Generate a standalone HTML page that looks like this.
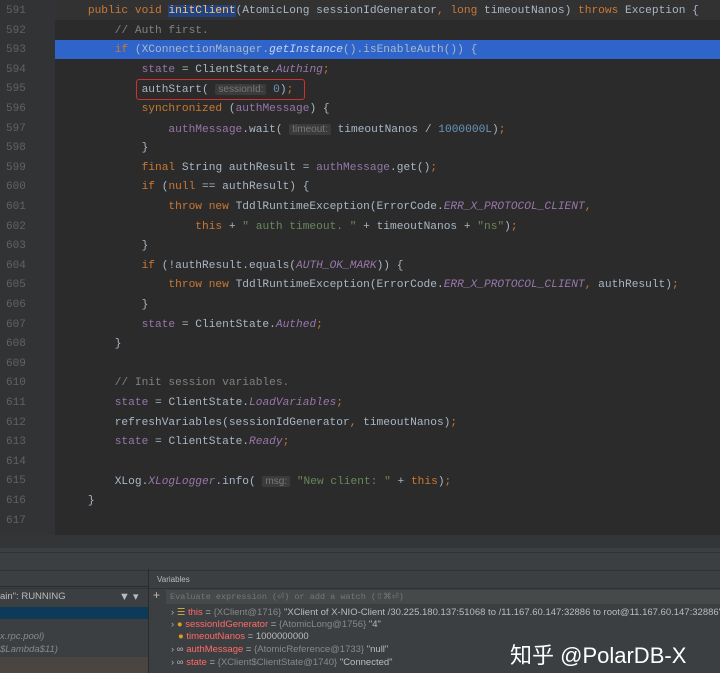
<!DOCTYPE html>
<html><head><meta charset="utf-8"><style>
*{margin:0;padding:0;box-sizing:border-box}
body{width:720px;height:673px;background:#2b2b2b;overflow:hidden;position:relative;font-family:"Liberation Mono",monospace}
.gut{position:absolute;left:0;top:0;width:55px;height:535px;background:#313335}
.ln{position:absolute;left:6px;width:40px;font-size:11px;color:#606366;height:19.6px;line-height:19.6px;margin-top:2px}
.code{position:absolute;left:61px;font-size:11.2px;color:#a9b7c6;height:19.6px;line-height:19.6px;white-space:pre;margin-top:2px}
.k{color:#cc7832}.c{color:#808080}.i{color:#9876aa;font-style:italic}.n{color:#6897bb}.s{color:#6a8759}.f{color:#ffc66d}
.h{font-family:"Liberation Sans",sans-serif;font-size:10px;color:#787878;background:#3b3b3b;padding:0 3px;border-radius:2px}
.panel{position:absolute;left:0;top:535px;width:720px;height:138px;background:#3c3f41}
.t{font-family:"Liberation Sans",sans-serif;position:absolute;font-size:9.5px;color:#bbb;white-space:nowrap}
</style></head><body>
<div class="gut"></div>
<div style="position:absolute;left:55px;top:0;width:665px;height:20px;background:#323232"></div>
<div style="position:absolute;left:55px;top:40px;width:665px;height:19px;background:#2f65ca"></div>
<div style="position:absolute;left:136px;top:79px;width:169px;height:21px;border:1.5px solid #d03030;border-radius:3px"></div>
<div id="c"></div>
<script>
var L=[
['591','    <span class="k">public void</span> <span class="f" style="background:#214283">initClient</span>(AtomicLong sessionIdGenerator<span class="k">,</span> <span class="k">long</span> timeoutNanos) <span class="k">throws</span> Exception {'],
['592','        <span class="c">// Auth first.</span>'],
['593','        <span class="k">if</span> (XConnectionManager.<span class="i" style="color:#c5d4f0">getInstance</span>().isEnableAuth()) {'],
['594','            <span class="i" style="font-style:normal">state</span> = ClientState.<span class="i">Authing</span><span class="k">;</span>'],
['595','            authStart( <span class="h">sessionId:</span> <span class="n">0</span>)<span class="k">;</span>'],
['596','            <span class="k">synchronized</span> (<span class="i" style="font-style:normal">authMessage</span>) {'],
['597','                <span class="i" style="font-style:normal">authMessage</span>.wait( <span class="h">timeout:</span> timeoutNanos / <span class="n">1000000L</span>)<span class="k">;</span>'],
['598','            }'],
['599','            <span class="k">final</span> String authResult = <span class="i" style="font-style:normal">authMessage</span>.get()<span class="k">;</span>'],
['600','            <span class="k">if</span> (<span class="k">null</span> == authResult) {'],
['601','                <span class="k">throw new</span> TddlRuntimeException(ErrorCode.<span class="i">ERR_X_PROTOCOL_CLIENT</span><span class="k">,</span>'],
['602','                    <span class="k">this</span> + <span class="s">" auth timeout. "</span> + timeoutNanos + <span class="s">"ns"</span>)<span class="k">;</span>'],
['603','            }'],
['604','            <span class="k">if</span> (!authResult.equals(<span class="i">AUTH_OK_MARK</span>)) {'],
['605','                <span class="k">throw new</span> TddlRuntimeException(ErrorCode.<span class="i">ERR_X_PROTOCOL_CLIENT</span><span class="k">,</span> authResult)<span class="k">;</span>'],
['606','            }'],
['607','            <span class="i" style="font-style:normal">state</span> = ClientState.<span class="i">Authed</span><span class="k">;</span>'],
['608','        }'],
['609',''],
['610','        <span class="c">// Init session variables.</span>'],
['611','        <span class="i" style="font-style:normal">state</span> = ClientState.<span class="i">LoadVariables</span><span class="k">;</span>'],
['612','        refreshVariables(sessionIdGenerator<span class="k">,</span> timeoutNanos)<span class="k">;</span>'],
['613','        <span class="i" style="font-style:normal">state</span> = ClientState.<span class="i">Ready</span><span class="k">;</span>'],
['614',''],
['615','        XLog.<span class="i">XLogLogger</span>.info( <span class="h">msg:</span> <span class="s">"New client: "</span> + <span class="k">this</span>)<span class="k">;</span>'],
['616','    }'],
['617','']];
var h='';L.forEach(function(l,i){var y=(i*19.6).toFixed(1);h+='<div class="ln" style="top:'+y+'px">'+l[0]+'</div><div class="code" style="top:'+y+'px">'+l[1]+'</div>';});
document.getElementById('c').innerHTML=h;
</script>
<div class="panel">
<div style="position:absolute;left:0;top:0;width:720px;height:13px;background:#333537"></div>
<div style="position:absolute;left:0;top:17px;width:720px;height:1px;background:#323232"></div>
<div style="position:absolute;left:0;top:35px;width:720px;height:1px;background:#323232"></div>
<div style="position:absolute;left:0;top:53px;width:720px;height:1px;background:#323232"></div>
<div style="position:absolute;left:148px;top:34px;width:1px;height:104px;background:#2b2b2b"></div>
<div class="t" style="left:157px;top:40px;font-size:8px">Variables</div>
<div style="position:absolute;left:0;top:51px;width:148px;height:1px;background:#2b2b2b"></div>
<div class="t" style="left:0;top:56px">ain": RUNNING</div>
<div class="t" style="left:119px;top:55px;font-size:11px">▼ ▾</div>
<div style="position:absolute;left:0;top:72px;width:148px;height:12px;background:#0d3a58"></div>
<div class="t" style="left:0;top:96px;color:#888;font-style:italic">x.rpc.pool)</div>
<div class="t" style="left:0;top:109px;color:#888;font-style:italic">$Lambda$11)</div>
<div style="position:absolute;left:0;top:122px;width:148px;height:16px;background:#4a4540"></div>
<div class="t" style="left:153px;top:53px;font-size:12px">+</div>
<div style="position:absolute;left:166px;top:55px;width:554px;height:14px;background:#45494a"></div>
<div class="t" style="left:170px;top:57px;color:#777;font-family:'Liberation Mono',monospace;font-size:8.5px">Evaluate expression (⏎) or add a watch (⇧⌘⏎)</div>
<div class="t" style="left:171px;top:72px"><span style="color:#aaa">›</span> <span style="color:#d8b24a">☰</span> <span style="color:#ff6b68">this</span> = <span style="color:#888">{XClient@1716}</span> "XClient of X-NIO-Client /30.225.180.137:51068 to /11.167.60.147:32886 to root@11.167.60.147:32886"</div>
<div class="t" style="left:171px;top:84px"><span style="color:#aaa">›</span> <span style="color:#d8a020">●</span> <span style="color:#ff6b68">sessionIdGenerator</span> = <span style="color:#888">{AtomicLong@1756}</span> "4"</div>
<div class="t" style="left:178px;top:96px"><span style="color:#d8a020">●</span> <span style="color:#ff6b68">timeoutNanos</span> = 1000000000</div>
<div class="t" style="left:171px;top:109px"><span style="color:#aaa">›</span> ∞ <span style="color:#ff6b68">authMessage</span> = <span style="color:#888">{AtomicReference@1733}</span> "null"</div>
<div class="t" style="left:171px;top:122px"><span style="color:#aaa">›</span> ∞ <span style="color:#ff6b68">state</span> = <span style="color:#888">{XClient$ClientState@1740}</span> "Connected"</div>
<div style="position:absolute;left:510px;top:103px;font-family:'Liberation Sans','Noto Sans CJK SC',sans-serif;font-size:22px;color:#fff;white-space:nowrap">知乎 @PolarDB-X</div>
</div>
</body></html>
